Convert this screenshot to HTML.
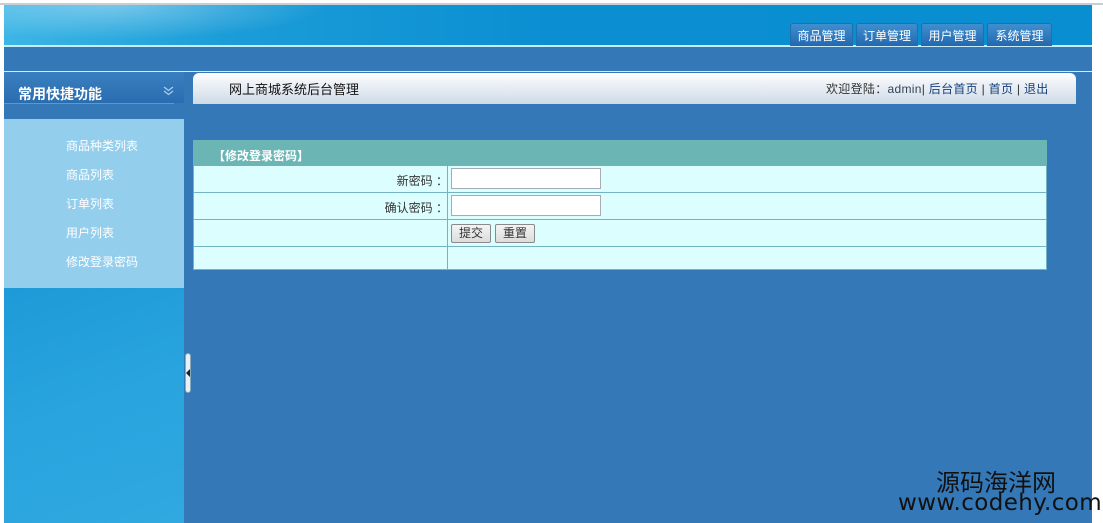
<!DOCTYPE html>
<html><head><meta charset="utf-8"><style>
*{margin:0;padding:0;box-sizing:border-box}
body{width:1103px;height:523px;overflow:hidden;background:#fff;position:relative;font-family:"Liberation Sans","Noto Sans CJK SC",sans-serif;font-size:12px}
.a{position:absolute}
.tab{position:absolute;top:23px;height:23px;background:linear-gradient(#3f8fcf,#2468b0);border:1px solid #1e6fb0;border-bottom:none;border-radius:3px 3px 0 0;color:#fff;font-size:12px;text-align:center;line-height:24px}
.mi{position:absolute;left:66px;color:#fff;font-size:12px}
.row{position:absolute;left:193px;width:854px;background:#dcfefe;border:1px solid #72b3c4;border-top:none}
.row .c{position:absolute;left:253px;top:0;bottom:0;border-left:1px solid #72b3c4}
.lbl{position:absolute;right:598px;top:6px;color:#333}
.inp{position:absolute;left:257px;top:2px;width:150px;height:21px;background:#fff;border:1px solid #a5acb2}
.btn{position:absolute;top:4px;height:19px;background:linear-gradient(#f4f4f4,#dcdcdc);border:1px solid #8a8a8a;border-radius:2px;color:#333;font-size:12px;text-align:center;line-height:17px}
</style></head><body>
<div class="a" style="left:0;top:3px;width:1103px;height:2px;background:#c8cfd4"></div>
<div class="a" style="left:4px;top:5px;width:1088px;height:518px;background:#3478b8"></div>
<div class="a" style="left:4px;top:5px;width:1088px;height:41px;background:linear-gradient(90deg,#3db6e6 0%,#1c9dd8 20%,#0b8fd2 50%,#0a8ed2 100%)"></div>
<div class="a" style="left:4px;top:5px;width:360px;height:41px;background:radial-gradient(ellipse at 30% 0%,rgba(255,255,255,.35),rgba(255,255,255,0) 60%)"></div>
<div class="a" style="left:4px;top:45px;width:1088px;height:2px;background:#c8ecf8"></div>
<div class="a" style="left:4px;top:71px;width:1088px;height:1px;background:#d8ecf8"></div>
<div class="tab" style="left:790px;width:63px">商品管理</div>
<div class="tab" style="left:856px;width:62px">订单管理</div>
<div class="tab" style="left:921px;width:63px">用户管理</div>
<div class="tab" style="left:987px;width:65px">系统管理</div>
<div class="a" style="left:4px;top:72px;width:180px;height:31px;background:linear-gradient(#3a80c0,#2a6cb0)"></div>
<div class="a" style="left:4px;top:103px;width:170px;height:1px;background:#5a9ad0"></div>
<div class="a" style="left:18px;top:84px;color:#fff;font-weight:bold;font-size:14px">常用快捷功能</div>
<svg class="a" style="left:163px;top:86px" width="11" height="10" viewBox="0 0 11 10"><path d="M1 1 L5.5 4.5 L10 1 M1 5 L5.5 8.5 L10 5" fill="none" stroke="#a8d0f0" stroke-width="1.2"/></svg>
<div class="a" style="left:4px;top:119px;width:180px;height:169px;background:#93ceec"></div>
<div class="mi" style="top:137px">商品种类列表</div>
<div class="mi" style="top:166px">商品列表</div>
<div class="mi" style="top:195px">订单列表</div>
<div class="mi" style="top:224px">用户列表</div>
<div class="mi" style="top:253px">修改登录密码</div>
<div class="a" style="left:4px;top:288px;width:180px;height:235px;background:linear-gradient(160deg,#1e9ad8 0%,#29a4de 50%,#30a8e0 100%)"></div>
<div class="a" style="left:185px;top:353px;width:6px;height:40px;background:#e8f0f8;border-radius:3px;border:1px solid #8ab"></div>
<div class="a" style="left:186px;top:369px;width:0;height:0;border-top:4px solid transparent;border-bottom:4px solid transparent;border-right:4px solid #123"></div>
<div class="a" style="left:193px;top:73px;width:883px;height:31px;background:linear-gradient(#fdfdfe,#cfdbe8);border-radius:6px 6px 0 0"></div>
<div class="a" style="left:229px;top:79px;font-size:13px;color:#111">网上商城系统后台管理</div>
<div class="a" style="left:826px;top:80px;font-size:12px;color:#333;letter-spacing:0.3px">欢迎登陆：<span style="color:#345">admin</span>| <span style="color:#14407a">后台首页</span> | <span style="color:#14407a">首页</span> | <span style="color:#14407a">退出</span></div>
<div class="a" style="left:193px;top:140px;width:854px;height:26px;background:#6bb5b5"></div>
<div class="a" style="left:213px;top:147px;color:#fff;font-weight:bold;font-size:12px">【修改登录密码】</div>
<div class="row" style="top:166px;height:27px"><div class="c"></div><div class="lbl">新密码 ：</div><div class="inp"></div></div>
<div class="row" style="top:193px;height:27px"><div class="c"></div><div class="lbl">确认密码 ：</div><div class="inp"></div></div>
<div class="row" style="top:220px;height:27px"><div class="c"></div><div class="btn" style="left:257px;width:40px">提交</div><div class="btn" style="left:301px;width:40px">重置</div></div>
<div class="row" style="top:247px;height:23px"><div class="c"></div></div>
<div class="a" style="left:936px;top:466px;font-size:24px;color:#111;font-family:'Noto Sans CJK SC',sans-serif;line-height:30px">源码海洋网</div>
<div class="a" style="left:898px;top:489px;font-size:23px;color:#111;line-height:28px;font-family:'DejaVu Sans','Liberation Sans',sans-serif;letter-spacing:0.4px">www.codehy.com</div>
</body></html>
